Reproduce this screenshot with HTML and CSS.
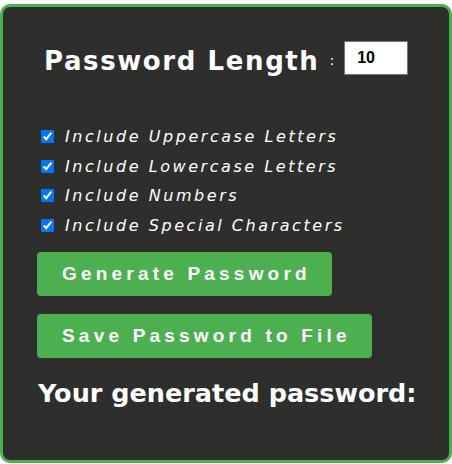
FILE: index.html
```html
<!DOCTYPE html>
<html>
<head>
<meta charset="utf-8">
<link rel="stylesheet" href="styles.css">
</head>
<body>
<div class="card">
  <div class="length-row">
    <label class="length-label" for="len">Password Length</label>
    <span class="colon">:</span>
    <input id="len" class="length-input" type="text" value="10">
  </div>
  <div class="options">
    <label class="opt"><input type="checkbox" checked><span>Include Uppercase Letters</span></label>
    <label class="opt"><input type="checkbox" checked><span>Include Lowercase Letters</span></label>
    <label class="opt"><input type="checkbox" checked><span>Include Numbers</span></label>
    <label class="opt"><input type="checkbox" checked><span>Include Special Characters</span></label>
  </div>
  <div class="actions">
    <button class="btn">Generate Password</button>
    <button class="btn">Save Password to File</button>
  </div>
  <h2 class="result">Your generated password:</h2>
</div>
</body>
</html>
```
FILE: styles.css
```css
html, body {
  margin: 0;
  padding: 0;
  background: #ffffff;
}
.card {
  box-sizing: border-box;
  margin-top: 4px;
  width: 452px;
  height: 459px;
  background: #2e2e2d;
  border: 3px solid #4caf50;
  border-radius: 10px;
  padding: 31px 0 0 34px;
  color: #fff;
}
.length-row {
  display: flex;
  align-items: center;
  padding-left: 7px;
  height: 40px;
}
.length-label {
  padding-top: 6px;
  font-family: "DejaVu Sans", Verdana, sans-serif;
  font-weight: bold;
  font-size: 26px;
  letter-spacing: 1.6px;
}
.colon {
  padding-top: 4px;
  font-family: "DejaVu Sans", sans-serif;
  font-size: 14px;
  margin-left: 10px;
  margin-right: 10px;
}
.length-input {
  box-sizing: border-box;
  width: 64px;
  height: 34px;
  border: 1px solid #767676;
  padding: 0 0 0 12px;
  font-family: "Liberation Sans", Arial, sans-serif;
  font-weight: bold;
  font-size: 16px;
  color: #000;
}
.options {
  margin-top: 49px;
  display: flex;
  flex-direction: column;
  gap: 10px;
}
.opt {
  display: flex;
  align-items: center;
  height: 19.5px;
  font-family: "DejaVu Sans", Verdana, sans-serif;
  font-style: italic;
  font-size: 16px;
  letter-spacing: 2.55px;
}
.opt input {
  width: 13px;
  height: 13px;
  margin: 0 11px 0 4px;
}
.actions {
  margin-top: 17px;
  display: flex;
  flex-direction: column;
  align-items: flex-start;
  gap: 18px;
}
.btn {
  background: #4caf50;
  color: #fff;
  border: none;
  border-radius: 4px;
  height: 44px;
  padding: 0 21px 0 25px;
  font-family: "Liberation Sans", Arial, sans-serif;
  font-weight: bold;
  font-size: 19px;
  letter-spacing: 4.2px;
}
.result {
  margin: 20px 0 0 1px;
  font-family: "DejaVu Sans", Verdana, sans-serif;
  font-weight: bold;
  font-size: 25.5px;
}
```
